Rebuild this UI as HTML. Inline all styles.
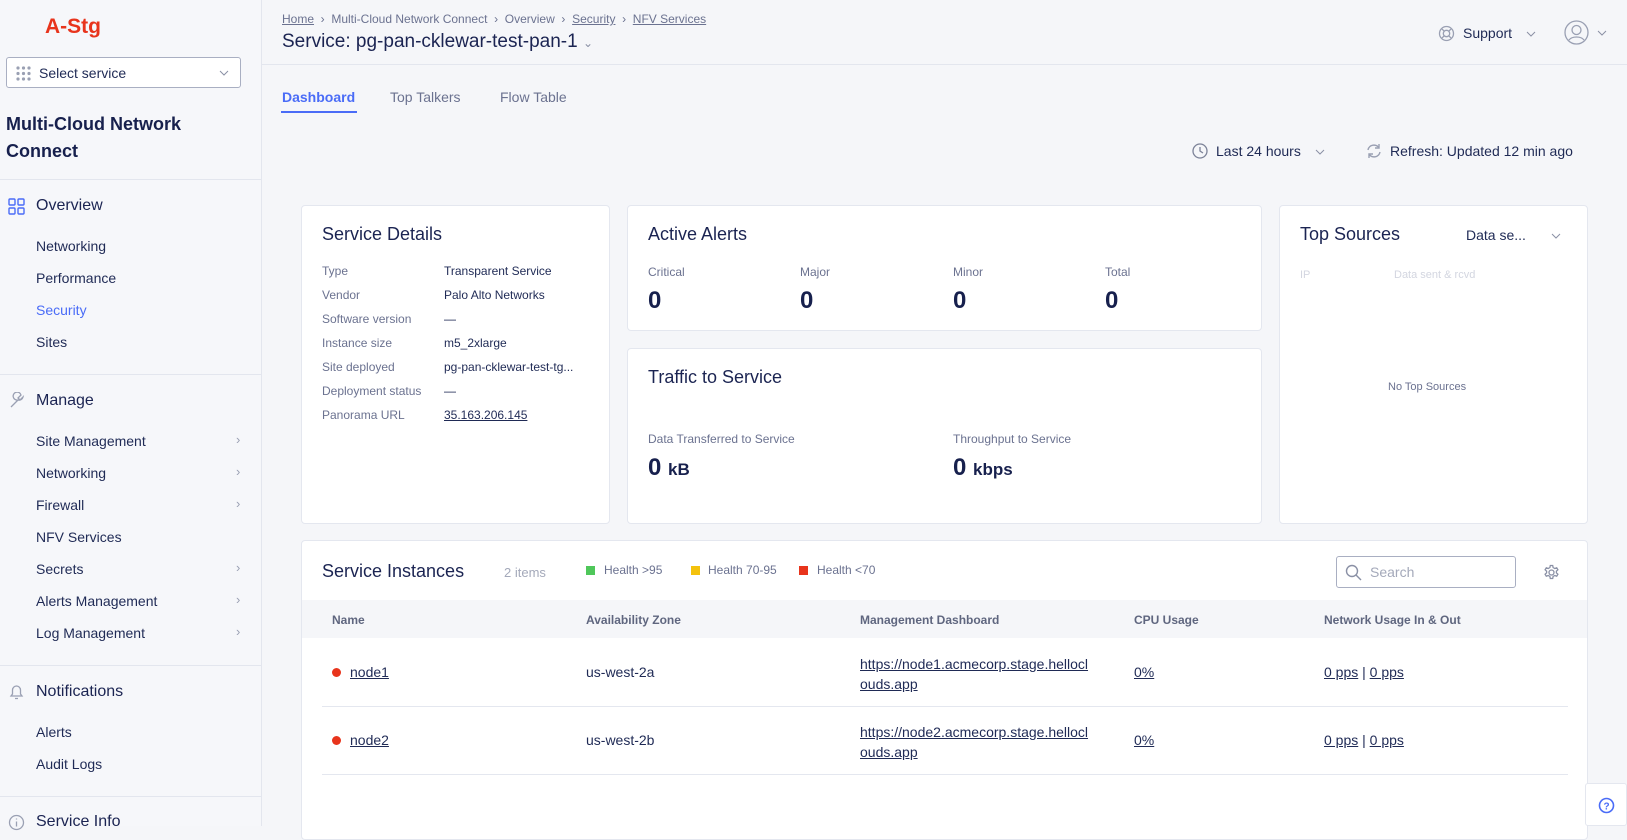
<!DOCTYPE html>
<html><head><meta charset="utf-8"><style>
*{box-sizing:border-box;margin:0;padding:0}
body{width:1627px;height:826px;overflow:hidden;background:#f5f6f9;font-family:"Liberation Sans",Arial,sans-serif;color:#1b2452;position:relative}
.abs{position:absolute;white-space:nowrap}
.side{position:absolute;left:0;top:0;width:262px;height:826px;background:#f6f7fa;border-right:1px solid #e3e6ee}
.hr{position:absolute;left:0;width:261px;height:1px;background:#e3e6ee}
.sec{font-size:16px;color:#1b2452}
.item{font-size:14px;color:#1f2a55;left:36px}
.chev{left:236px;color:#9aa0b3;font-size:13px}
.card{position:absolute;background:#fff;border:1px solid #e4e7ef;border-radius:4px}
.lbl{font-size:12px;color:#6b7290}
.val{font-size:12px;color:#1f2a55}
.big{font-size:24px;font-weight:bold;color:#17204d}
.h{font-size:18px;color:#1b2452}
.th{font-size:12px;font-weight:bold;color:#5f667f}
.td{font-size:14px;color:#1f2a55}
u{text-decoration:underline}
</style></head><body>
<div class="side">
 <div class="abs" style="left:45px;top:15px;font-size:21px;font-weight:bold;color:#e8341c">A-Stg</div>
 <div class="abs" style="left:6px;top:57px;width:235px;height:31px;border:1px solid #a9afc2;border-radius:3px;background:#fff">
  <svg class="abs" style="left:9px;top:8px" width="16" height="15"><g fill="#9aa0b3"><circle cx="2" cy="2" r="1.6"/><circle cx="7.5" cy="2" r="1.6"/><circle cx="13" cy="2" r="1.6"/><circle cx="2" cy="7.5" r="1.6"/><circle cx="7.5" cy="7.5" r="1.6"/><circle cx="13" cy="7.5" r="1.6"/><circle cx="2" cy="13" r="1.6"/><circle cx="7.5" cy="13" r="1.6"/><circle cx="13" cy="13" r="1.6"/></g></svg>
  <div class="abs" style="left:32px;top:7px;font-size:14px;color:#1f2a55">Select service</div>
  <svg class="abs" style="left:212px;top:12px" width="10" height="6"><path d="M1 1l4 4 4-4" stroke="#8a90a5" fill="none"/></svg>
 </div>
 <div class="abs" style="left:6px;top:111px;font-size:18px;font-weight:bold;line-height:27px;color:#17204d">Multi-Cloud Network<br>Connect</div>
 <div class="hr" style="top:179px"></div>
 <svg class="abs" style="left:8px;top:198px" width="17" height="17"><g fill="none" stroke="#4a6cf7" stroke-width="1.4"><rect x="1" y="1" width="6" height="6" rx="1"/><rect x="10" y="1" width="6" height="6" rx="1"/><rect x="1" y="10" width="6" height="6" rx="1"/><rect x="10" y="10" width="6" height="6" rx="1"/></g></svg>
 <div class="abs sec" style="left:36px;top:197px">Overview</div>
 <div class="abs item" style="top:238px">Networking</div>
 <div class="abs item" style="top:270px">Performance</div>
 <div class="abs item" style="top:302px;color:#4a6cf7">Security</div>
 <div class="abs item" style="top:334px">Sites</div>
 <div class="hr" style="top:374px"></div>
 <svg class="abs" style="left:8px;top:392px" width="17" height="17"><path d="M3 15l7-7a4 4 0 1 1 3-5l-3 3 2 2 3-3a4 4 0 0 1-5 3l-6 6z" fill="none" stroke="#9aa0b3" stroke-width="1.3"/></svg>
 <div class="abs sec" style="left:36px;top:392px">Manage</div>
 <div class="abs item" style="top:433px">Site Management</div><div class="abs chev" style="top:432px">›</div>
 <div class="abs item" style="top:465px">Networking</div><div class="abs chev" style="top:464px">›</div>
 <div class="abs item" style="top:497px">Firewall</div><div class="abs chev" style="top:496px">›</div>
 <div class="abs item" style="top:529px">NFV Services</div>
 <div class="abs item" style="top:561px">Secrets</div><div class="abs chev" style="top:560px">›</div>
 <div class="abs item" style="top:593px">Alerts Management</div><div class="abs chev" style="top:592px">›</div>
 <div class="abs item" style="top:625px">Log Management</div><div class="abs chev" style="top:624px">›</div>
 <div class="hr" style="top:665px"></div>
 <svg class="abs" style="left:8px;top:683px" width="17" height="18"><path d="M3 13h11l-1.5-2V7a4 4 0 0 0-8 0v4zM7 15.5h3" fill="none" stroke="#9aa0b3" stroke-width="1.3"/></svg>
 <div class="abs sec" style="left:36px;top:683px">Notifications</div>
 <div class="abs item" style="top:724px">Alerts</div>
 <div class="abs item" style="top:756px">Audit Logs</div>
 <div class="hr" style="top:796px"></div>
 <svg class="abs" style="left:8px;top:814px" width="17" height="17"><circle cx="8.5" cy="8.5" r="7" fill="none" stroke="#9aa0b3" stroke-width="1.3"/><path d="M8.5 7.5v5M8.5 4.5v1" stroke="#9aa0b3" stroke-width="1.3"/></svg>
 <div class="abs sec" style="left:36px;top:813px">Service Info</div>
</div>

<div class="abs" style="left:262px;top:64px;width:1365px;height:1px;background:#e3e6ee"></div>
<div class="abs" style="left:282px;top:12px;font-size:12px;color:#6b7290"><u>Home</u> &nbsp;›&nbsp; Multi-Cloud Network Connect &nbsp;›&nbsp; Overview &nbsp;›&nbsp; <u>Security</u> &nbsp;›&nbsp; <u>NFV Services</u></div>
<div class="abs" style="left:282px;top:31px;font-size:19px;color:#1b2452">Service: pg-pan-cklewar-test-pan-1 <span style="font-size:12px;color:#8a90a5">⌄</span></div>
<svg class="abs" style="left:1438px;top:25px" width="17" height="17"><g fill="none" stroke="#9aa0b3" stroke-width="1.3"><circle cx="8.5" cy="8.5" r="7"/><circle cx="8.5" cy="8.5" r="3.2"/><path d="M4 4l2.2 2.2M13 4l-2.2 2.2M4 13l2.2-2.2M13 13l-2.2-2.2"/></g></svg>
<div class="abs" style="left:1463px;top:25px;font-size:14px;color:#1f2a55">Support</div>
<svg class="abs" style="left:1526px;top:31px" width="10" height="6"><path d="M1 1l4 4 4-4" stroke="#8a90a5" fill="none"/></svg>
<svg class="abs" style="left:1564px;top:20px" width="25" height="25"><g fill="none" stroke="#9aa0b3" stroke-width="1.3"><circle cx="12.5" cy="12.5" r="11.5"/><circle cx="12.5" cy="10" r="4.5"/><path d="M5 20c3-4 12-4 15 0"/></g></svg>
<svg class="abs" style="left:1597px;top:30px" width="10" height="6"><path d="M1 1l4 4 4-4" stroke="#8a90a5" fill="none"/></svg>

<div class="abs" style="left:282px;top:89px;font-size:14px;font-weight:bold;color:#4a6cf7">Dashboard</div>
<div class="abs" style="left:281px;top:111px;width:76px;height:2px;background:#4a6cf7"></div>
<div class="abs" style="left:390px;top:89px;font-size:14px;color:#6b7290">Top Talkers</div>
<div class="abs" style="left:500px;top:89px;font-size:14px;color:#6b7290">Flow Table</div>

<svg class="abs" style="left:1192px;top:143px" width="16" height="16"><g fill="none" stroke="#7c8298" stroke-width="1.3"><circle cx="8" cy="8" r="7"/><path d="M8 4v4l3 2"/></g></svg>
<div class="abs" style="left:1216px;top:143px;font-size:14px;color:#1f2a55">Last 24 hours</div>
<svg class="abs" style="left:1315px;top:149px" width="10" height="6"><path d="M1 1l4 4 4-4" stroke="#8a90a5" fill="none"/></svg>
<svg class="abs" style="left:1366px;top:143px" width="16" height="16"><g fill="none" stroke="#9aa0b3" stroke-width="1.4"><path d="M2 7a6 6 0 0 1 11-2M14 9a6 6 0 0 1-11 2"/><path d="M13 1v4h-4M3 15v-4h4"/></g></svg>
<div class="abs" style="left:1390px;top:143px;font-size:14px;color:#1f2a55">Refresh: Updated 12 min ago</div>

<div class="card" style="left:301px;top:205px;width:309px;height:319px">
 <div class="abs h" style="left:20px;top:18px">Service Details</div>
 <div class="abs lbl" style="left:20px;top:53px;line-height:24px">Type<br>Vendor<br>Software version<br>Instance size<br>Site deployed<br>Deployment status<br>Panorama URL</div>
 <div class="abs val" style="left:142px;top:53px;line-height:24px">Transparent Service<br>Palo Alto Networks<br>—<br>m5_2xlarge<br>pg-pan-cklewar-test-tg...<br>—<br><u>35.163.206.145</u></div>
</div>
<div class="card" style="left:627px;top:205px;width:635px;height:126px">
 <div class="abs h" style="left:20px;top:18px">Active Alerts</div>
 <div class="abs lbl" style="left:20px;top:59px">Critical</div><div class="abs big" style="left:20px;top:81px">0</div>
 <div class="abs lbl" style="left:172px;top:59px">Major</div><div class="abs big" style="left:172px;top:81px">0</div>
 <div class="abs lbl" style="left:325px;top:59px">Minor</div><div class="abs big" style="left:325px;top:81px">0</div>
 <div class="abs lbl" style="left:477px;top:59px">Total</div><div class="abs big" style="left:477px;top:81px">0</div>
</div>
<div class="card" style="left:627px;top:348px;width:635px;height:176px">
 <div class="abs h" style="left:20px;top:18px">Traffic to Service</div>
 <div class="abs lbl" style="left:20px;top:83px">Data Transferred to Service</div>
 <div class="abs big" style="left:20px;top:105px">0 <span style="font-size:17px">kB</span></div>
 <div class="abs lbl" style="left:325px;top:83px">Throughput to Service</div>
 <div class="abs big" style="left:325px;top:105px">0 <span style="font-size:17px">kbps</span></div>
</div>
<div class="card" style="left:1279px;top:205px;width:309px;height:319px">
 <div class="abs h" style="left:20px;top:18px">Top Sources</div>
 <div class="abs" style="left:186px;top:21px;font-size:14px;color:#1f2a55">Data se...</div>
 <svg class="abs" style="left:271px;top:27px" width="10" height="6"><path d="M1 1l4 4 4-4" stroke="#8a90a5" fill="none"/></svg>
 <div class="abs" style="left:20px;top:63px;font-size:11px;color:#d3d6e0">IP</div>
 <div class="abs" style="left:114px;top:63px;font-size:11px;color:#d3d6e0">Data sent &amp; rcvd</div>
 <div class="abs" style="left:108px;top:175px;font-size:11px;color:#6b7290">No Top Sources</div>
</div>
<div class="card" style="left:301px;top:540px;width:1287px;height:300px">
 <div class="abs h" style="left:20px;top:20px">Service Instances</div>
 <div class="abs" style="left:202px;top:24px;font-size:13px;color:#a4a9ba">2 items</div>
 <div class="abs" style="left:284px;top:25px;width:9px;height:9px;background:#4fc75a"></div>
 <div class="abs lbl" style="left:302px;top:22px">Health &gt;95</div>
 <div class="abs" style="left:389px;top:25px;width:9px;height:9px;background:#f4c20d"></div>
 <div class="abs lbl" style="left:406px;top:22px">Health 70-95</div>
 <div class="abs" style="left:497px;top:25px;width:9px;height:9px;background:#e8341c"></div>
 <div class="abs lbl" style="left:515px;top:22px">Health &lt;70</div>
 <div class="abs" style="left:1034px;top:15px;width:180px;height:32px;border:1px solid #a9afc2;border-radius:3px"></div>
 <svg class="abs" style="left:1043px;top:23px" width="17" height="17"><g fill="none" stroke="#8a90a5" stroke-width="1.4"><circle cx="7" cy="7" r="5.5"/><path d="M11 11l5 5"/></g></svg>
 <div class="abs" style="left:1068px;top:23px;font-size:14px;color:#a4a9ba">Search</div>
 <svg class="abs" style="left:1241px;top:23px" width="17" height="17"><g fill="none" stroke="#8a90a5" stroke-width="1.3"><circle cx="8.5" cy="8.5" r="2.5"/><path d="M7.3 1.5h2.4l.4 2 1.7 1 1.9-.7 1.2 2-1.5 1.4v1.6l1.5 1.4-1.2 2-1.9-.7-1.7 1-.4 2H7.3l-.4-2-1.7-1-1.900.7-1.2-2 1.5-1.4V7.2L2.1 5.8l1.2-2 1.9.7 1.7-1z"/></g></svg>
 <div class="abs" style="left:0;top:59px;width:1285px;height:38px;background:#f5f6f9"></div>
 <div class="abs th" style="left:30px;top:72px">Name</div>
 <div class="abs th" style="left:284px;top:72px">Availability Zone</div>
 <div class="abs th" style="left:558px;top:72px">Management Dashboard</div>
 <div class="abs th" style="left:832px;top:72px">CPU Usage</div>
 <div class="abs th" style="left:1022px;top:72px">Network Usage In &amp; Out</div>

 <div class="abs" style="left:30px;top:127px;width:9px;height:9px;border-radius:50%;background:#e8341c"></div>
 <div class="abs td" style="left:48px;top:123px"><u>node1</u></div>
 <div class="abs td" style="left:284px;top:123px">us-west-2a</div>
 <div class="abs td" style="left:558px;top:113px;line-height:20px"><u>https://node1.acmecorp.stage.hellocl</u><br><u>ouds.app</u></div>
 <div class="abs td" style="left:832px;top:123px"><u>0%</u></div>
 <div class="abs td" style="left:1022px;top:123px"><u>0 pps</u> | <u>0 pps</u></div>
 <div class="abs" style="left:20px;top:165px;width:1246px;height:1px;background:#e4e7ef"></div>

 <div class="abs" style="left:30px;top:195px;width:9px;height:9px;border-radius:50%;background:#e8341c"></div>
 <div class="abs td" style="left:48px;top:191px"><u>node2</u></div>
 <div class="abs td" style="left:284px;top:191px">us-west-2b</div>
 <div class="abs td" style="left:558px;top:181px;line-height:20px"><u>https://node2.acmecorp.stage.hellocl</u><br><u>ouds.app</u></div>
 <div class="abs td" style="left:832px;top:191px"><u>0%</u></div>
 <div class="abs td" style="left:1022px;top:191px"><u>0 pps</u> | <u>0 pps</u></div>
 <div class="abs" style="left:20px;top:233px;width:1246px;height:1px;background:#e4e7ef"></div>
</div>
<div class="abs" style="left:1585px;top:783px;width:42px;height:43px;background:#fff;border:1px solid #e4e7ef;border-radius:3px"></div>
<svg class="abs" style="left:1598px;top:797px" width="17" height="17"><circle cx="8.5" cy="8.5" r="7" fill="none" stroke="#4a6cf7" stroke-width="1.6"/><text x="8.5" y="12.5" font-size="10" font-weight="bold" text-anchor="middle" fill="#4a6cf7" font-family="Liberation Sans">?</text></svg>
</body></html>
